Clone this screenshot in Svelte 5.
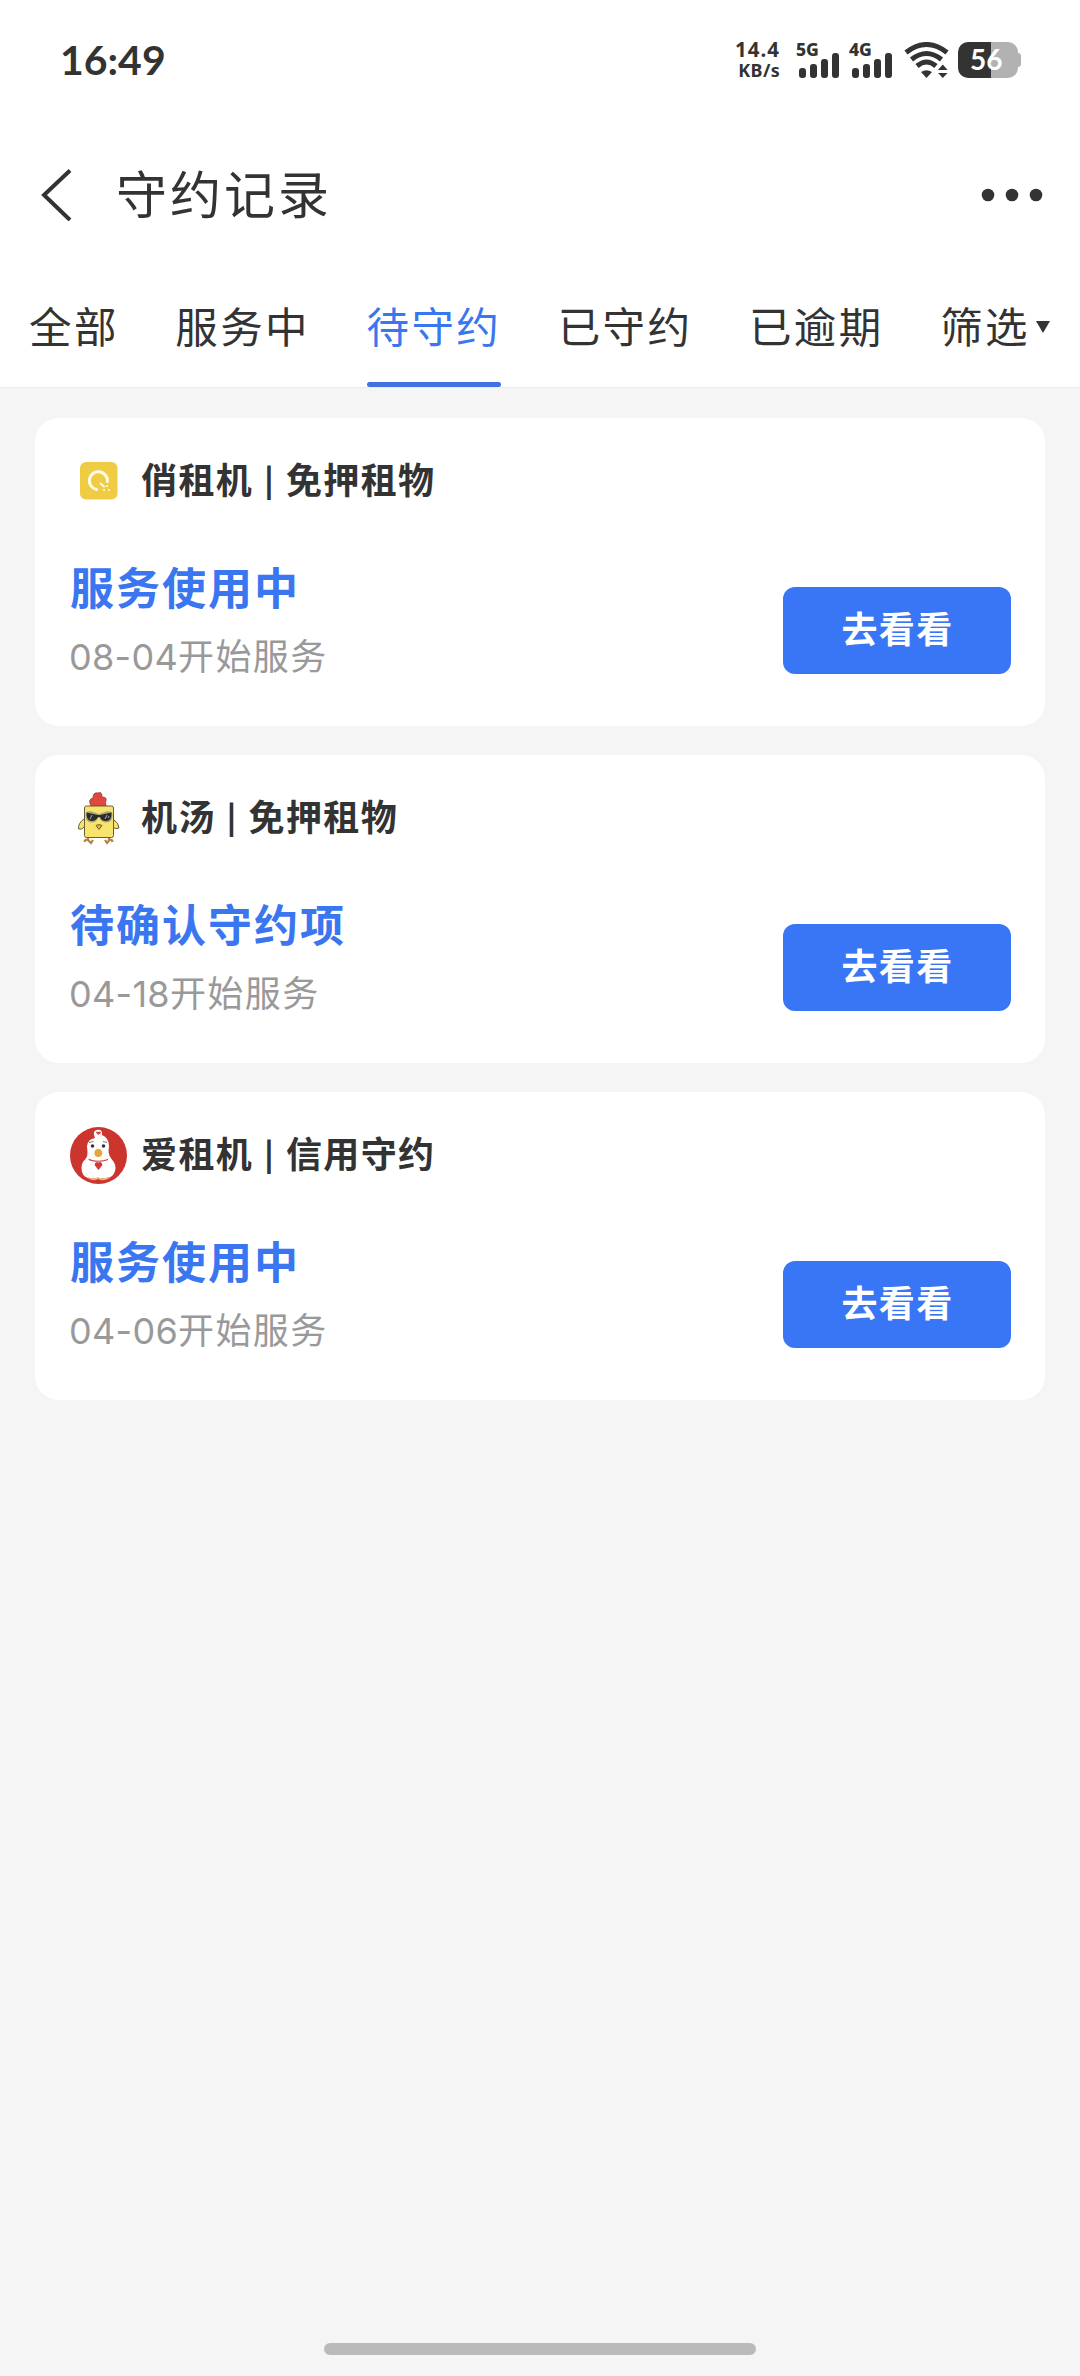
<script>
  const tabs = ['全部', '服务中', '待守约', '已守约', '已逾期']
  let active = $state('待守约')

  const records = [
    { logo: 'ring', name: '俏租机 | 免押租物', status: '服务使用中', date: '08-04' },
    { logo: 'chick', name: '机汤 | 免押租物', status: '待确认守约项', date: '04-18' },
    { logo: 'hen', name: '爱租机 | 信用守约', status: '服务使用中', date: '04-06' },
  ]

  const bars = [10, 14, 19, 25]
</script>

{#snippet signal(label)}
  <div class="signal">
    <span>{label}</span>
    <svg width="42" height="36" viewBox="0 0 42 36">
      {#each bars as h, i}
        <rect x={1 + i * 11} y={36 - h} width="7" height={h} rx="3" />
      {/each}
    </svg>
  </div>
{/snippet}

<div class="screen">
  <header>
    <div class="statusbar">
      <time>16:49</time>
      <div class="indicators">
        <div class="speed"><b>14.4</b><span>KB/s</span></div>
        {@render signal('5G')}
        {@render signal('4G')}
        <svg class="wifi" width="46" height="36" viewBox="0 0 46 36">
          <g fill="none" stroke="#333" stroke-width="5">
            <path d="M2 10.500Q22.500 -5.500 43 10.500" />
            <path d="M7.500 17.500Q22.500 5.500 37.500 17.500" />
            <path d="M13 24Q22.500 16 32 24" />
          </g>
          <path d="M17 30Q22.500 26.500 28 30L22.500 36z" />
          <path d="M34 28L38.800 22.500L43.600 28zM34 31H43.600L38.800 36z" />
        </svg>
        <div class="battery"><span>56</span></div>
      </div>
    </div>

    <div class="navbar">
      <svg width="32" height="52" viewBox="0 0 32 52">
        <path d="M30 1.500L4 26L30 51" fill="none" stroke="#333" stroke-width="4" />
      </svg>
      <h1>守约记录</h1>
      <svg class="more" width="62" height="14" viewBox="0 0 62 14">
        <circle cx="7" cy="7" r="6.300" />
        <circle cx="31" cy="7" r="6.300" />
        <circle cx="55" cy="7" r="6.300" />
      </svg>
    </div>

    <nav>
      {#each tabs as tab}
        <button class="tab" class:active={tab === active} onclick={() => (active = tab)}>{tab}</button>
      {/each}
      <button class="tab filter">筛选<i></i></button>
    </nav>
  </header>

  <main>
    {#each records as r}
      <section class="card">
        <div class="merchant">
          <svg width="58" height="58" viewBox="0 0 58 58">
            {#if r.logo === 'ring'}
              <rect x="10" y="9" width="37.500" height="37.500" rx="6" fill="#f0cc45" />
              <path d="M26.500 36.500A9 9 0 1 1 37.300 28.500" fill="none" stroke="#fffbe8" stroke-width="3" stroke-linecap="round" />
              <path d="M30.500 30.500L34 33.500M37 33h.1M34 37h.1M39 37h.1" stroke="#fffbe8" stroke-width="2" stroke-linecap="round" />
            {:else if r.logo === 'chick'}
              <path d="M21 16Q17.500 9 23 8Q23 2 28 3Q32 1 32 7Q38 7 35.500 12L36 16z" fill="#e0483f" stroke="#8d4038" stroke-width=".8" />
              <path d="M14 29Q8 33 8.500 39Q12 40 14 37M43 29Q49 33 49 38Q46 40 43 37" fill="#f8e36c" stroke="#67603b" stroke-width="1" />
              <path d="M18 47V51M14.500 52Q15 49 18 50L21 53L23 50M39 47V51M35 50L37 53L39.500 50Q42 49 42.500 52" fill="none" stroke="#b8813c" stroke-width="2.200" />
              <rect x="14.500" y="16" width="29" height="31.500" rx="2" fill="#f8e36c" stroke="#67603b" stroke-width="1" />
              <path d="M15.500 24Q16 20.500 22 21.500L29 24L36 21.500Q42 20.500 42.500 24Q43 33 36 32.500Q31 32 29.500 28H28Q26 33 21 32.500Q15 32 15.500 24z" fill="#aaa67d" />
              <path d="M16.500 22.500L28 25H30L41.500 22.500Q42 31 36 31Q31 31 30 27H28Q26 31 22 31Q16 31 16.500 22.500z" fill="#2c2c2a" />
              <path d="M20 29L22 25M35 29L37 25M38 28L39 26" stroke="#aaa" stroke-width="1" />
              <path d="M26 35.500Q29 33.500 32 35.500L29 39.500z" fill="#e7af39" stroke="#7b602c" stroke-width="1" />
            {:else}
              <circle cx="28.500" cy="28.500" r="28.500" fill="#cc352e" />
              <path d="M25 11Q22 4.500 26.500 3Q33 2 32 8Q39 11 39 19L38.500 25Q39 29 41.500 32Q47 38 45 44Q43 51 36 51.500H21Q14 51 12 45Q10 37 15.500 32Q18 29 17.500 25L17 19Q18 12 25 11z" fill="#fff" />
              <path d="M28.500 8L26 5.800Q26.500 3.500 28.500 5Q30.500 3.500 31 5.800z" fill="#d8453e" />
              <path d="M19 15.500L23.500 14.500M33 14.500L37 15.500" stroke="#555" stroke-width=".8" />
              <circle cx="22.500" cy="19" r="1.800" fill="#3a3335" />
              <circle cx="33.500" cy="19" r="1.800" fill="#3a3335" />
              <circle cx="28.300" cy="26" r="3.900" fill="#e8a638" />
              <path d="M18 31.500Q28 36 39 31.500L37 33.500Q28 36 19.500 33.500z" fill="#d03a34" />
              <path d="M28.500 43L24.500 38Q25.500 33.500 28.500 35.500Q31.500 33.500 32.500 38z" fill="#d03a34" />
              <path d="M18 50.500Q23 54 28 51Q33 54 39 50.500" fill="none" stroke="#e3b77f" stroke-width="1.500" />
            {/if}
          </svg>
          <h2>{r.name}</h2>
        </div>
        <div class="body">
          <div>
            <p class="status">{r.status}</p>
            <p class="date"><span>{r.date}</span>开始服务</p>
          </div>
          <button class="go">去看看</button>
        </div>
      </section>
    {/each}
  </main>

  <footer></footer>
</div>

<style>
  :global(body) {
    background: #f5f5f5;
  }
  .screen {
    display: flex;
    flex-direction: column;
    height: 2376px;
    font-family: Lato, "Noto Sans CJK SC", sans-serif;
    color: #333;
  }
  svg {
    display: block;
    fill: #333;
  }
  h1, h2, p {
    margin: 0;
  }
  button {
    padding: 0;
    border: none;
    background: none;
    font-family: inherit;
    color: inherit;
  }
  header {
    background: #fff;
    border-bottom: 1px solid #ececec;
  }
  .statusbar {
    display: flex;
    justify-content: space-between;
    align-items: center;
    height: 120px;
    padding: 0 62px 0 60px;
  }
  time {
    margin-top: -2px;
    font-size: 41px;
    font-weight: 700;
  }
  .indicators {
    display: flex;
    height: 36px;
  }
  .speed {
    display: flex;
    flex-direction: column;
    align-items: flex-end;
    width: 46px;
    margin-right: 18px;
    white-space: nowrap;
  }
  .speed b, .speed span {
    font-family: "Noto Sans", sans-serif;
    font-size: 20.500px;
    font-weight: 700;
    line-height: 14px;
    letter-spacing: 1px;
  }
  .speed span {
    margin-top: 7px;
    font-size: 18px;
    letter-spacing: .3px;
  }
  .signal {
    position: relative;
    width: 42px;
    margin-right: 11px;
  }
  .signal span {
    position: absolute;
    left: -2px;
    top: -2px;
    font-family: "Noto Sans", sans-serif;
    font-size: 17.500px;
    font-weight: 800;
    line-height: 18px;
  }
  .wifi {
    margin-right: 8px;
  }
  .battery {
    position: relative;
    width: 60px;
    border-radius: 10px;
    background: linear-gradient(90deg, #333 33px, #b2b2b2 33px);
    color: #fff;
    font-size: 28px;
    font-weight: 700;
    line-height: 35px;
  }
  .battery span {
    margin-left: 12px;
  }
  .battery::after {
    content: '';
    position: absolute;
    left: 60px;
    top: 11px;
    width: 3px;
    height: 14px;
    border-radius: 0 4px 4px 0;
    background: #b2b2b2;
  }
  .navbar {
    display: flex;
    align-items: center;
    height: 150px;
    padding: 0 37px 0 40px;
  }
  h1 {
    flex: 1;
    margin: -7px 0 0 44px;
    font-size: 51px;
    font-weight: 400;
    letter-spacing: 3px;
  }
  nav {
    display: flex;
    gap: 56.500px;
    height: 117px;
    padding-left: 29px;
  }
  .tab {
    position: relative;
    height: 117px;
    padding-bottom: 9px;
    font-size: 42.500px;
    letter-spacing: 2.400px;
    white-space: nowrap;
  }
  .tab.active {
    color: #3a76ee;
  }
  .tab.active::after {
    content: '';
    position: absolute;
    left: 0;
    right: 0;
    bottom: 0;
    height: 5px;
    border-radius: 3px;
    background: #4272e0;
  }
  .filter {
    display: flex;
    align-items: center;
  }
  .filter i {
    margin: 5px 0 0 6px;
    border: 7px solid transparent;
    border-top: 12px solid #333;
    border-bottom: 0;
  }
  main {
    display: flex;
    flex: 1;
    flex-direction: column;
    gap: 29px;
    padding: 30px 35px 0;
  }
  .card {
    box-sizing: border-box;
    height: 308px;
    padding: 35px 34px 0 35px;
    border-radius: 24px;
    background: #fff;
  }
  .merchant {
    display: flex;
    align-items: center;
    height: 58px;
  }
  h2 {
    margin: -4px 0 0 13px;
    font-size: 36px;
    line-height: 52px;
    letter-spacing: 1.400px;
    word-spacing: .8px;
  }
  .body {
    display: flex;
    justify-content: space-between;
    padding-top: 45px;
  }
  .status {
    color: #3a76f0;
    font-size: 44px;
    font-weight: 700;
    line-height: 64px;
    letter-spacing: 2px;
  }
  .date {
    margin-top: 6px;
    color: #999;
    font-size: 36px;
    line-height: 60px;
    letter-spacing: 1.400px;
  }
  .date span {
    margin-left: -1px;
    font-family: Inter, sans-serif;
    letter-spacing: .3px;
  }
  .go {
    width: 228px;
    height: 87px;
    margin-top: 31px;
    padding: 0 0 8px 1px;
    border-radius: 12px;
    background: #3876f6;
    color: #fff;
    font-size: 36px;
    font-weight: 700;
    letter-spacing: 1.400px;
  }
  footer {
    width: 432px;
    height: 12px;
    margin: 0 auto 21px;
    border-radius: 6px;
    background: #bababa;
  }
</style>
